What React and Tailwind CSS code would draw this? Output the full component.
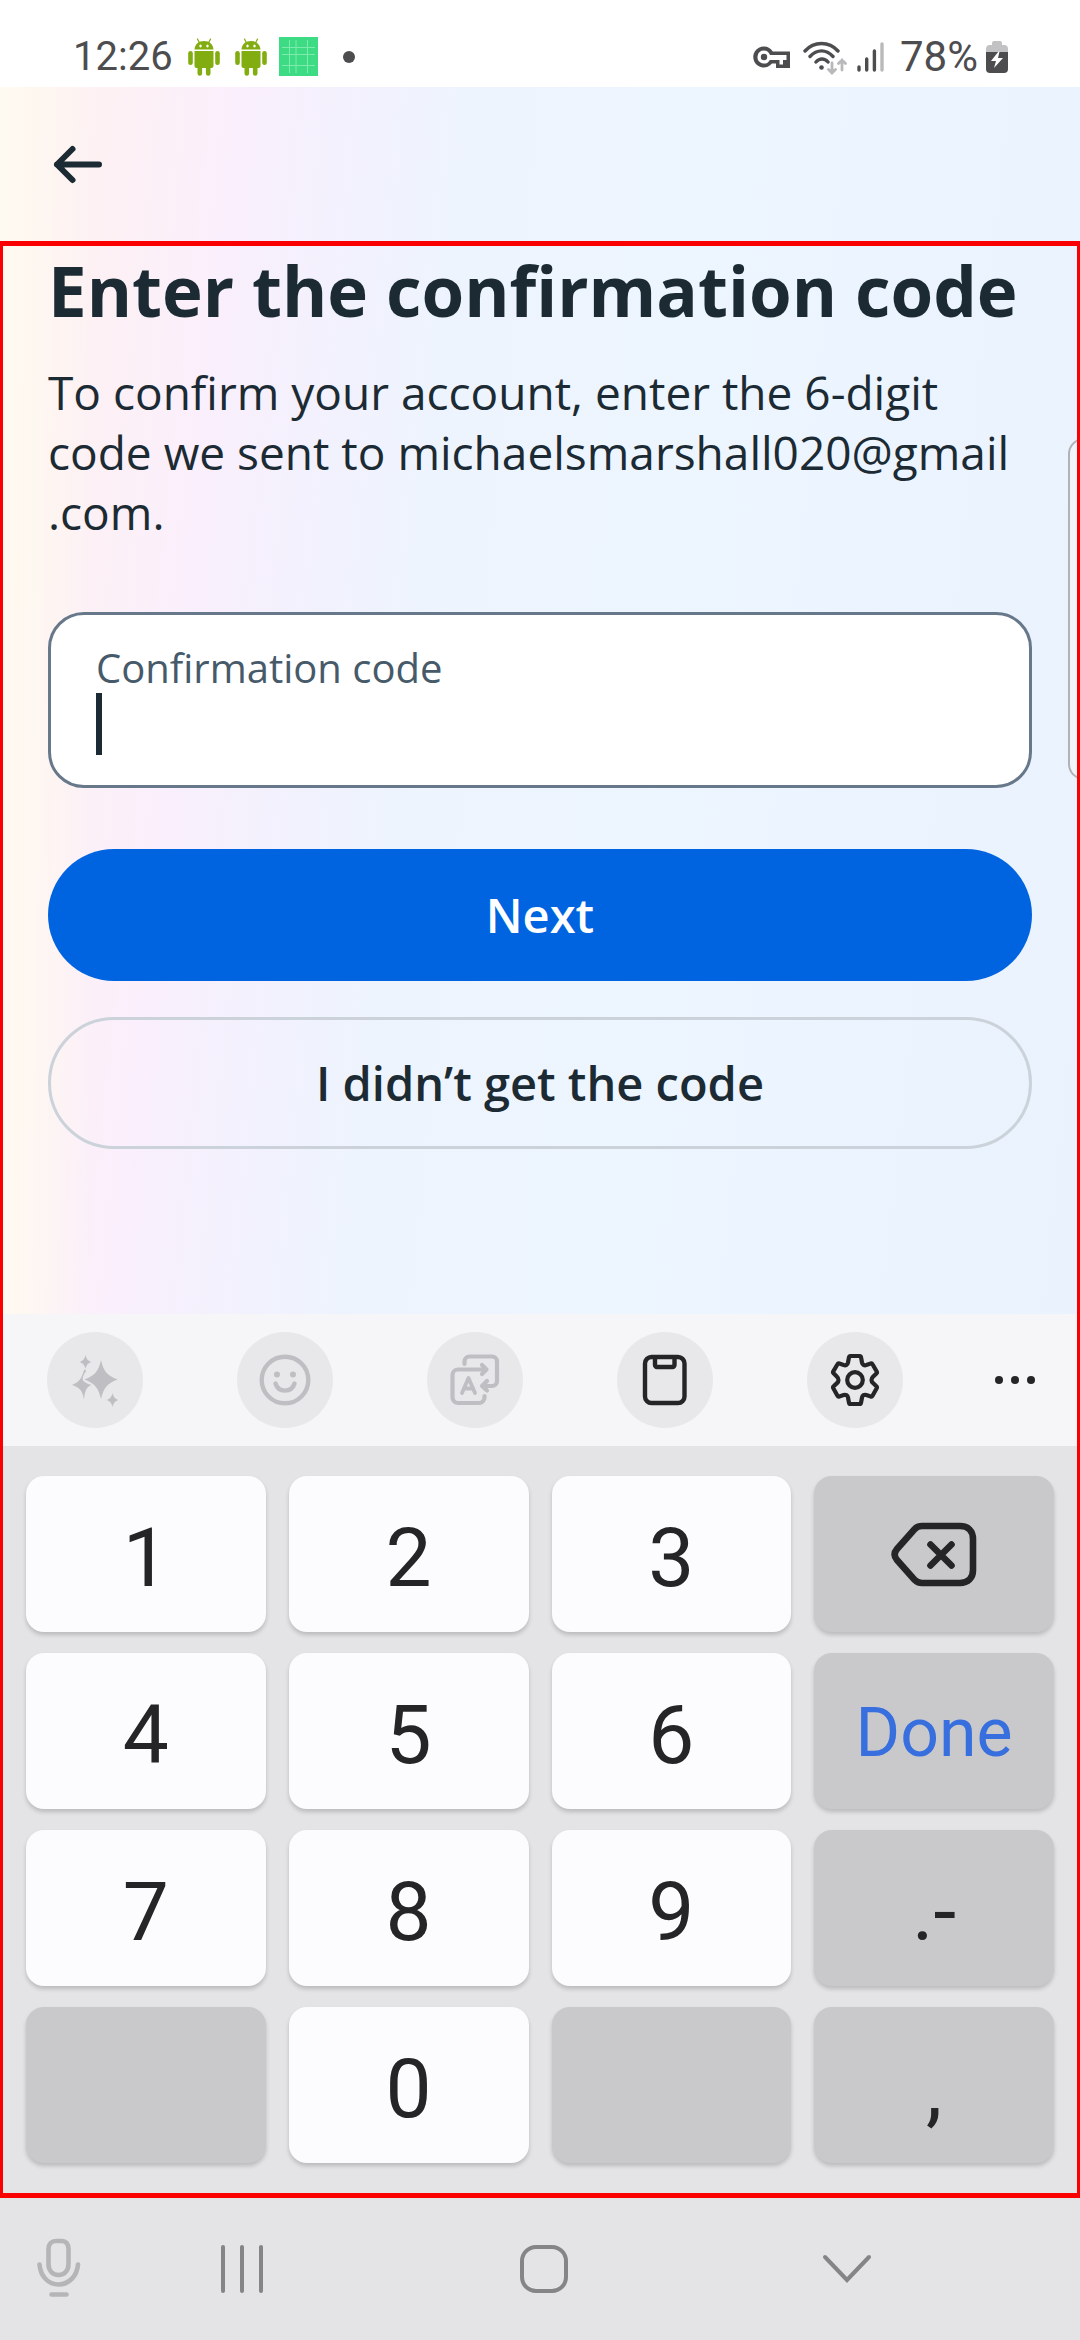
const digitKeys = 'bg-[#fcfcfe] text-[#252527]';
const functionKeys = 'bg-[#c9c9cb] text-[#252527]';

const keys = [
  { label: '1', kind: 'digit' },
  { label: '2', kind: 'digit' },
  { label: '3', kind: 'digit' },
  { label: 'Backspace', kind: 'backspace' },
  { label: '4', kind: 'digit' },
  { label: '5', kind: 'digit' },
  { label: '6', kind: 'digit' },
  { label: 'Done', kind: 'done' },
  { label: '7', kind: 'digit' },
  { label: '8', kind: 'digit' },
  { label: '9', kind: 'digit' },
  { label: '.-', kind: 'symbol' },
  { label: 'Blank left', kind: 'blank' },
  { label: '0', kind: 'digit' },
  { label: 'Blank right', kind: 'blank' },
  { label: ',', kind: 'symbol' },
];

function AndroidIcon() {
  return (
    <svg width="32" height="38" viewBox="0 0 32 38" fill="#82ad10" aria-hidden="true">
      <path d="M9.5 1l2 4M22.5 1l-2 4" stroke="#82ad10" strokeWidth="1.2" strokeLinecap="round" />
      <path fillRule="evenodd" d="M6.5 11.5C6.8 6.3 10.7 3 16 3s9.2 3.3 9.5 8.5zM12.5 6.5a1.2 1.5 0 1 0 .01 0zM19.5 6.5a1.2 1.5 0 1 0 .01 0z" />
      <path d="M6.5 13h19v15a2 2 0 0 1-2 2h-1v5.500a2.300 2.300 0 0 1-4.600 0V30h-3.800v5.500a2.300 2.300 0 0 1-4.600 0V30h-1a2 2 0 0 1-2-2z" />
      <rect x="0.2" y="13" width="4.6" height="14" rx="2.3" />
      <rect x="27.2" y="13" width="4.6" height="14" rx="2.3" />
    </svg>
  );
}

function StatusBar() {
  return (
    <header className="flex h-[87px] items-center justify-between bg-white pt-[26px] pr-[72px] pl-[73px] font-[Roboto,sans-serif] text-[40px] leading-[60px] text-[#4d4d4f]">
      <div className="flex items-center">
        <span className="mr-[15px]">12:26</span>
        <AndroidIcon />
        <span className="w-[15px]" />
        <AndroidIcon />
        <svg className="ml-3" width="39" height="39" viewBox="0 0 39 39" aria-hidden="true">
          <rect width="39" height="39" fill="#3ddc84" />
          <path d="M10.5 3v33M17 3v33M28.5 3v33M3 10.5h33M3 17.5h33M3 28.5h33" stroke="#7debae" strokeWidth="1" />
        </svg>
        <span className="ml-[25px] size-3 rounded-full bg-[#4d4d4f]" />
      </div>
      <div className="flex items-center">
        <svg className="mr-3" width="38" height="24" viewBox="0 0 38 24" aria-hidden="true">
          <path fillRule="evenodd" fill="#4d4d4f" d="M11 1.5c4 0 7 2 8.8 5H37v16.5H23v-4.500h-4A10.500 10.500 0 1 1 11 1.500zM11 5.500a6.500 6.500 0 1 0 5.800 9.500H26.500V19.500H30V15H33.500V10H17C16 7.500 14 5.500 11 5.500z" />
          <circle cx="11" cy="12" r="3.2" fill="#4d4d4f" />
        </svg>
        <svg className="mr-[10px]" width="44" height="36" viewBox="0 0 44 36" fill="none" strokeLinecap="round" aria-hidden="true">
          <path d="M2 12C11 2 26 2 35 12M7 17.5c7-7.5 16-7.5 23 0M13 23c3.5-4 8.5-4 12 0" stroke="#4d4d4f" strokeWidth="3.4" />
          <circle cx="18.5" cy="28.5" r="2.3" fill="#4d4d4f" />
          <path d="M29 24v9M25.5 30.5L29 34l3.5-3.5M39 31V21M35.5 24.5L39 21l3.5 3.5" stroke="#b9b9bb" strokeWidth="2.8" />
        </svg>
        <svg className="mr-4" width="27" height="30" viewBox="0 0 27 30" fill="none" strokeLinecap="round" strokeWidth="3.4" aria-hidden="true">
          <path d="M2 25v3M9.700 17v11M17.400 9v19" stroke="#4d4d4f" />
          <path d="M25 2v26" stroke="#b9b9bb" />
        </svg>
        <span className="mr-2 text-[42px]">78%</span>
        <svg width="22" height="32" viewBox="0 0 22 32" aria-hidden="true">
          <path d="M6 2a2 2 0 0 1 2-2h6a2 2 0 0 1 2 2v2h2a4 4 0 0 1 4 4v3H0V8a4 4 0 0 1 4-4h2z" fill="#c2c2c4" />
          <path d="M0 11h22v17a4 4 0 0 1-4 4H4a4 4 0 0 1-4-4z" fill="#4d4d4f" />
          <path d="M12.5 10.5L5 20h5l-2 7L17 17h-5l1.5-6.5z" fill="#fff" />
        </svg>
      </div>
    </header>
  );
}

function SparkleIcon() {
  return (
    <svg width="56" height="56" viewBox="0 0 56 56" fill="#bfbfc3" aria-hidden="true">
      <path d="M34 8c2.5 11 6 15.5 16.5 19.5C40 31.5 36.5 36 34 47c-2.5-11-6-15.5-16.5-19.5C28 23.5 31.5 19 34 8z" />
      <path d="M17 18c.8-.6 2 0 2 1.200-3 4-4 7-3 9.200 2 2 5 3.600 8.500 4.600-5 2-6.500 5-7.500 14.500C15.500 39 13 35.500 5 33c7-3 9.500-6 12-15z" />
      <path d="M18.500 3c1 4 2.200 5.500 5.800 7-3.600 1.500-4.800 3-5.800 7-1-4-2.200-5.500-5.800-7 3.600-1.500 4.800-3 5.800-7zM45.500 41c1 4 2.200 5.500 5.800 7-3.600 1.500-4.800 3-5.800 7-1-4-2.200-5.500-5.800-7 3.600-1.500 4.800-3 5.800-7z" />
    </svg>
  );
}

function SmileIcon() {
  return (
    <svg width="56" height="56" viewBox="0 0 56 56" fill="none" stroke="#bfbfc3" strokeWidth="4.4" strokeLinecap="round" aria-hidden="true">
      <circle cx="28" cy="28" r="23.3" />
      <path d="M18.5 31.5c3 9.500 16 9.500 19 0" />
      <circle cx="20" cy="22.5" r="3" fill="#bfbfc3" stroke="none" />
      <circle cx="36" cy="22.5" r="3" fill="#bfbfc3" stroke="none" />
    </svg>
  );
}

function TranslateIcon() {
  return (
    <svg width="56" height="56" viewBox="0 0 56 56" fill="none" stroke="#bfbfc3" strokeWidth="4.2" strokeLinecap="round" strokeLinejoin="round" aria-hidden="true">
      <path d="M17.5 12V9.500a5 5 0 0 1 5-5H45a5 5 0 0 1 5 5V29a5 5 0 0 1-5 5H36M40 29l-5 5 5 4.500" />
      <path d="M39.5 17.5H11a5.500 5.500 0 0 0-5.500 5.500v22.500a5.500 5.500 0 0 0 5.500 5.500h21a5.500 5.500 0 0 0 5.500-5.500V44M35 13l4.500 4.500L35 22" />
      <path d="M15 41l6.500-15L28 41M17.500 36.500h8" strokeWidth="3.8" />
    </svg>
  );
}

function ClipboardIcon() {
  return (
    <svg width="56" height="56" viewBox="0 0 56 56" fill="none" stroke="#252527" strokeWidth="4.4" aria-hidden="true">
      <rect x="8" y="5" width="39.5" height="46" rx="6.5" />
      <path d="M18 5v8a2 2 0 0 0 2 2h15.500a2 2 0 0 0 2-2V5" />
    </svg>
  );
}

function GearIcon() {
  return (
    <svg width="56" height="56" viewBox="0 0 56 56" fill="none" stroke="#252527" strokeWidth="4.2" strokeLinejoin="round" aria-hidden="true">
      <path d="M23.500 4h9a1.500 1.500 0 0 1 1.500 1.200l1 5.300c.5 2.300 2.200 3.200 4.300 2.600l4.400-1.500a1.500 1.500 0 0 1 1.800.7l4.200 7.200a1.500 1.500 0 0 1-.3 1.900L46 24.700c-2 1.900-2 4.500 0 6.400l3.400 3.200a1.500 1.500 0 0 1 .3 1.900l-4.200 7.500a1.500 1.500 0 0 1-1.800.7l-4.400-1.400c-2.100-.6-3.800.3-4.300 2.500l-1 5.300a1.500 1.500 0 0 1-1.500 1.200h-9a1.500 1.500 0 0 1-1.500-1.200l-1-5.300c-.5-2.200-2.200-3.100-4.300-2.500l-4.400 1.400a1.500 1.500 0 0 1-1.800-.7l-4.200-7.500a1.500 1.500 0 0 1 .3-1.900l3.400-3.200c2-1.900 2-4.500 0-6.400L6.600 21.300a1.500 1.500 0 0 1-.3-1.900l4.200-7.100a1.500 1.500 0 0 1 1.800-.7l4.400 1.500c2.100.6 3.800-.3 4.300-2.600l1-5.300A1.500 1.500 0 0 1 23.500 4z" />
      <circle cx="28" cy="28" r="7.8" />
    </svg>
  );
}

const tools = [
  { label: 'Writing assist', Icon: SparkleIcon },
  { label: 'Emoji', Icon: SmileIcon },
  { label: 'Translate', Icon: TranslateIcon },
  { label: 'Clipboard', Icon: ClipboardIcon },
  { label: 'Keyboard settings', Icon: GearIcon },
];

function KeyboardToolbar() {
  return (
    <div className="flex h-[132px] items-center justify-between bg-[#f6f6f8] px-[47px]">
      {tools.map(({ label, Icon }) => (
        <button key={label} aria-label={label} className="flex size-24 items-center justify-center rounded-full bg-[#e8e8ea]">
          <Icon />
        </button>
      ))}
      <button aria-label="More" className="flex h-24 w-9 items-center justify-center gap-2">
        <span className="size-2 shrink-0 rounded-full bg-[#252527]" />
        <span className="size-2 shrink-0 rounded-full bg-[#252527]" />
        <span className="size-2 shrink-0 rounded-full bg-[#252527]" />
      </button>
    </div>
  );
}

function BackspaceIcon() {
  return (
    <svg className="mt-1" width="88" height="68" viewBox="0 0 88 68" fill="none" stroke="#252527" strokeWidth="6.6" strokeLinecap="round" strokeLinejoin="round" aria-hidden="true">
      <path d="M32 4h38c8 0 13 5 13 13v31c0 8-5 13-13 13H32c-3 0-5.500-1-7.500-3.200L7 38c-3-3.500-3-7.500 0-11L24.500 7.200C26.500 5 29 4 32 4z" />
      <path d="M40.500 22.500l21 21M61.500 22.500l-21 21" />
    </svg>
  );
}

function Key({ label, kind }) {
  const tone = kind === 'digit' ? digitKeys : functionKeys;
  return (
    <button
      aria-label={label}
      className={`flex h-[156px] items-center justify-center rounded-[18px] shadow-[0_3px_4px_rgba(0,0,0,0.18)] ${tone}`}
    >
      {kind === 'backspace' && <BackspaceIcon />}
      {kind === 'done' && <span className="pt-1 text-[68px] leading-[72px] text-[#386fdf]">{label}</span>}
      {(kind === 'digit' || kind === 'symbol') && <span className="pt-2 text-[82px] leading-[96px]">{label}</span>}
    </button>
  );
}

function NavigationBar() {
  return (
    <nav className="flex h-[142px] items-center bg-[#e4e4e6]">
      <button aria-label="Voice input" className="w-[91px] pb-1 pl-9">
        <svg width="46" height="60" viewBox="0 0 46 60" fill="none" stroke="#b5b5b7" strokeWidth="4.6" strokeLinecap="round" aria-hidden="true">
          <path d="M12.500 12c0-5 3-8 7.500-8h5.500c4.500 0 7 3 7 8v15c0 6.500-4 11-10 11s-10-4.500-10-11z" />
          <path d="M3.500 27.500c1 12 9 20 19 20s18.500-8 19.500-20M15.500 57.500h15" />
        </svg>
      </button>
      <div className="mr-[82px] grid flex-1 grid-cols-3">
        <button aria-label="Recent apps" className="flex justify-center gap-[15px]">
          <span className="h-12 w-1 rounded-full bg-[#858587]" />
          <span className="h-12 w-1 rounded-full bg-[#858587]" />
          <span className="h-12 w-1 rounded-full bg-[#858587]" />
        </button>
        <button aria-label="Home" className="flex justify-center">
          <span className="size-12 rounded-2xl border-4 border-[#858587]" />
        </button>
        <button aria-label="Hide keyboard" className="flex items-center justify-center">
          <svg width="50" height="30" viewBox="0 0 50 30" fill="none" stroke="#858587" strokeWidth="4" strokeLinecap="round" aria-hidden="true">
            <path d="M3 3l22 23L47 3" />
          </svg>
        </button>
      </div>
    </nav>
  );
}

export default function App() {
  return (
    <div className="relative flex min-h-screen flex-col overflow-hidden font-['Open_Sans','Noto_Sans',sans-serif]">
      <StatusBar />
      <main className="flex-1 bg-[linear-gradient(90deg,#fffaf0_0px,#fffaf000_90px),linear-gradient(96deg,#fdf3f0_0px,#fdf1f4_110px,#faeffc_240px,#f3f1fd_340px,#edf4fe_480px,#edf5ff_60%,#eaf2fe_100%)]">
        <div className="flex h-[154px] items-center px-[52px]">
          <button aria-label="Back">
            <svg width="52" height="44" viewBox="0 0 52 44" fill="none" stroke="#1c2b33" strokeWidth="6" strokeLinecap="round" strokeLinejoin="round" aria-hidden="true">
              <path d="M20.500 7L5 22.500 20.500 38M5 22.500h42" />
            </svg>
          </button>
        </div>
        <div className="px-12 pb-[163px]">
          <h1 className="pt-[7px] text-[69px] leading-[84px] font-bold whitespace-nowrap text-[#1c2b33]">Enter the confirmation code</h1>
          <p className="mt-[30px] text-[46px] leading-[60px] text-[#1c2b33]">
            To confirm your account, enter the 6-digit code we sent to michaelsmarshall020@gmail
            <wbr />
            .com.
          </p>
          <div className="relative mt-[70px] flex h-[176px] flex-col rounded-[36px] border-[3px] border-[#67788a] bg-white px-[45px] pt-[27px]">
            <label htmlFor="code" className="text-[40px] leading-[52px] text-[#465a69]">
              Confirmation code
            </label>
            <input id="code" inputMode="numeric" className="h-[64px] w-full bg-transparent text-[42px] text-[#1c2b33] caret-transparent outline-none" />
            <span className="absolute top-[78px] left-[45px] h-[62px] w-[6px] bg-[#1c2b33]" />
          </div>
          <button className="mt-[61px] h-[132px] w-full rounded-full bg-[#0064e0] text-[47px] font-semibold text-white">Next</button>
          <button className="mt-9 h-[132px] w-full rounded-full border-[3px] border-[#cbd2d9] text-[47px] font-semibold text-[#1c2b33]">
            I didn’t get the code
          </button>
        </div>
      </main>
      <section aria-label="Keyboard" className="font-[Roboto,sans-serif]">
        <KeyboardToolbar />
        <div className="grid grid-cols-4 gap-x-[23px] gap-y-[21px] bg-[#e4e4e6] px-[26px] pt-[30px] pb-[35px]">
          {keys.map((key) => (
            <Key key={key.label} {...key} />
          ))}
        </div>
      </section>
      <NavigationBar />
      <div className="absolute top-[438px] -right-6 h-[342px] w-9 rounded-[16px] border-2 border-[#b0b2b6] bg-[#f0f5fc]" />
      <div className="pointer-events-none absolute inset-x-0 top-[241px] bottom-[142px] border-x-[3px] border-y-[5px] border-[#fb0000]" />
    </div>
  );
}
